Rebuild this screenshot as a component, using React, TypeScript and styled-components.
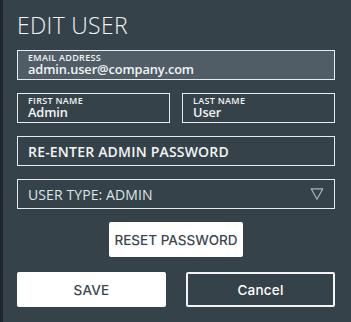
import React from "react";
import styled, { createGlobalStyle } from "styled-components";

const GlobalStyle = createGlobalStyle`
  html, body {
    margin: 0;
    padding: 0;
    background: #36424a;
  }
  * {
    box-sizing: border-box;
  }
`;

const Panel = styled.div`
  width: 351px;
  height: 322px;
  background: #36424a;
  border-left: 3px solid #1e262b;
  padding: 12px 16px 0 14px;
  font-family: "Open Sans", "Liberation Sans", sans-serif;
  color: #f2f4f5;
`;

const Title = styled.h1`
  margin: 0 0 12px 0;
  font-size: 23px;
  line-height: 26px;
  font-weight: 300;
  letter-spacing: 0.3px;
`;

const Fields = styled.div`
  display: flex;
  flex-direction: column;
  gap: 13px;
`;

const Row = styled.div`
  display: flex;
  gap: 12px;
`;

const Field = styled.div<{ $filled?: boolean; $grow?: boolean }>`
  flex: ${(p) => (p.$grow ? "1 1 0" : "0 0 auto")};
  height: 30px;
  border: 1px solid #e6eaec;
  background: ${(p) => (p.$filled ? "#505d66" : "transparent")};
  padding: 2px 10px 0;
  display: flex;
  flex-direction: column;
  justify-content: flex-start;
`;

const Label = styled.span`
  font-size: 9px;
  line-height: 10px;
  font-weight: 600;
  letter-spacing: 0.3px;
  text-transform: uppercase;
`;

const Value = styled.span`
  font-size: 12.8px;
  line-height: 13px;
  font-weight: 600;
  letter-spacing: -0.1px;
`;

const Placeholder = styled.span<{ $bold?: boolean }>`
  font-size: 14px;
  font-weight: ${(p) => (p.$bold ? 600 : 400)};
  letter-spacing: ${(p) => (p.$bold ? "0.2px" : "0.1px")};
  text-transform: uppercase;
`;

const InputBox = styled(Field)`
  flex-direction: row;
  align-items: center;
  justify-content: space-between;
  padding: 0 10px;
`;

const Select = styled(InputBox)`
  color: #dfe4e7;
`;

const Center = styled.div`
  display: flex;
  justify-content: center;
  margin-top: 13px;
`;

const Button = styled.button<{ $outline?: boolean }>`
  height: 35px;
  border-radius: 2px;
  font-family: Inter, "Open Sans", sans-serif;
  font-size: 13.5px;
  font-weight: 500;
  cursor: pointer;
  padding: 0;
  background: ${(p) => (p.$outline ? "transparent" : "#ffffff")};
  color: ${(p) => (p.$outline ? "#ffffff" : "#3a464e")};
  border: ${(p) => (p.$outline ? "2px solid #f2f4f5" : "none")};
`;

const ResetButton = styled(Button)`
  width: 134px;
  letter-spacing: 0;
`;

const Actions = styled.div`
  display: flex;
  gap: 20px;
  margin-top: 15px;
`;

const ActionButton = styled(Button)`
  width: 149px;
  letter-spacing: 0.2px;
`;

const Caret = () => (
  <svg width="14" height="14" viewBox="0 0 14 14">
    <path d="M1.2 1.8 H12.8 L7 12.2 Z" fill="none" stroke="#aab3b9" strokeWidth="1.2" strokeLinejoin="round" />
  </svg>
);

export default function App() {
  return (
    <>
      <GlobalStyle />
      <Panel>
        <Title>EDIT USER</Title>
        <Fields>
          <Field $filled>
            <Label>Email Address</Label>
            <Value>admin.user@company.com</Value>
          </Field>
          <Row>
            <Field $grow>
              <Label>First Name</Label>
              <Value>Admin</Value>
            </Field>
            <Field $grow>
              <Label>Last Name</Label>
              <Value>User</Value>
            </Field>
          </Row>
          <InputBox>
            <Placeholder $bold>Re-enter Admin Password</Placeholder>
          </InputBox>
          <Select>
            <Placeholder>User Type: Admin</Placeholder>
            <Caret />
          </Select>
        </Fields>
        <Center>
          <ResetButton>RESET PASSWORD</ResetButton>
        </Center>
        <Actions>
          <ActionButton>SAVE</ActionButton>
          <ActionButton $outline>Cancel</ActionButton>
        </Actions>
      </Panel>
    </>
  );
}
